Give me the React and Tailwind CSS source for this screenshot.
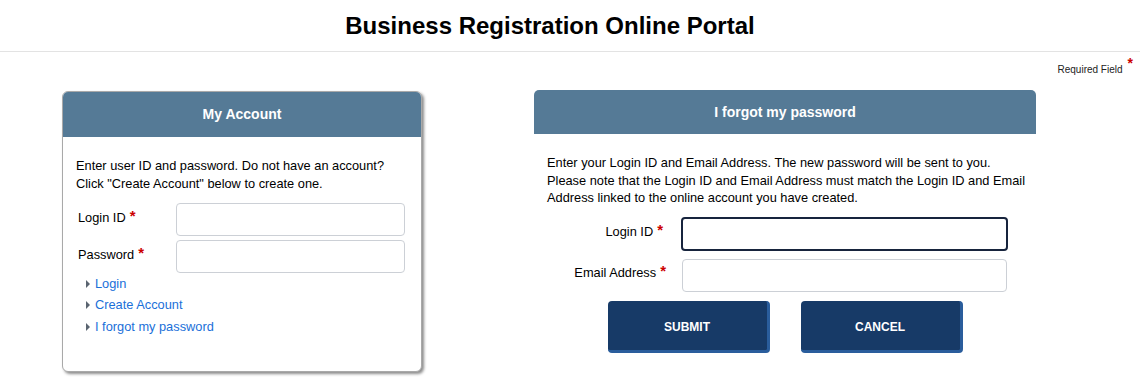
import React from "react";

const Star = () => (
  <span className="ml-1 align-top text-[15px] font-bold leading-none text-[#cc0000]">*</span>
);

const LinkItem = ({ children, h = "h-[21px]" }) => (
  <li className={`flex items-center ${h}`}>
    <span className="mr-[5px] inline-block h-0 w-0 border-y-[4px] border-l-[4px] border-y-transparent border-l-[#5a6470]" />
    <a href="#" className="text-[12.8px] text-[#1a6fd9]">
      {children}
    </a>
  </li>
);

const App = () => {
  return (
    <div className="min-h-[389px] bg-white text-black" style={{ fontFamily: '"Liberation Sans", Arial, sans-serif' }}>
      {/* Page title */}
      <header className="flex h-[52px] items-center justify-center border-b border-[#e3e3e3] pr-[40px]">
        <h1 className="text-[24px] font-bold">Business Registration Online Portal</h1>
      </header>

      <div className="flex justify-end pr-[7px] pt-[4px]">
        <span className="mt-[6px] text-[10px] text-[#222]">Required Field</span>
        <span className="ml-[5px] text-[14px] font-bold leading-none text-[#cc0000]">*</span>
      </div>

      <div className="flex items-start pl-[62px] pt-[14px]">
        {/* My Account */}
        <section className="w-[360px] h-[281px] rounded-[6px] border border-[#a9a9a9] bg-white shadow-[2px_2px_3px_rgba(0,0,0,0.45)]">
          <div className="flex h-[45px] items-center justify-center rounded-t-[5px] bg-[#557a96] text-[14px] font-bold text-white">
            My Account
          </div>
          <div className="px-[13px] pt-[20px]">
            <p className="whitespace-nowrap text-[12.8px] leading-[18px]">
              Enter user ID and password. Do not have an account?
              <br />
              Click "Create Account" below to create one.
            </p>
            <div className="mt-[10px] flex flex-col gap-[4px]">
              <div className="flex">
                <label className="w-[100px] pl-[2px] pt-[5px] text-[12.8px]">
                  Login ID<Star />
                </label>
                <input className="h-[33px] w-[229px] rounded-[4px] border border-[#ccd0d6] outline-none" />
              </div>
              <div className="flex">
                <label className="w-[100px] pl-[2px] pt-[5px] text-[12.8px]">
                  Password<Star />
                </label>
                <input type="password" className="h-[33px] w-[229px] rounded-[4px] border border-[#ccd0d6] outline-none" />
              </div>
            </div>
            <ul className="pl-[10px]">
              <LinkItem>Login</LinkItem>
              <LinkItem>Create Account</LinkItem>
              <LinkItem h="h-[23px]">I forgot my password</LinkItem>
            </ul>
          </div>
        </section>

        {/* Forgot password */}
        <section className="ml-[112px] w-[502px] -mt-[1px]">
          <div className="flex h-[44px] items-center justify-center rounded-t-[5px] bg-[#557a96] text-[14px] font-bold text-white">
            I forgot my password
          </div>
          <div className="pt-[20px]">
            <p className="whitespace-nowrap px-[13px] text-[12.8px] leading-[17.5px]">
              Enter your Login ID and Email Address. The new password will be sent to you.
              <br />
              Please note that the Login ID and Email Address must match the Login ID and Email
              <br />
              Address linked to the online account you have created.
            </p>
            <div className="mt-[10px] flex flex-col gap-[8px]">
              <div className="flex">
                <label className="w-[145px] pr-[16px] pt-[5px] text-right text-[12.8px]">
                  Login ID<Star />
                </label>
                <input
                  autoFocus
                  className="ml-[2px] h-[34px] w-[327px] rounded-[4px] border-2 border-[#17243d] px-[12px] outline-none"
                />
              </div>
              <div className="flex">
                <label className="w-[148px] pr-[16px] pt-[4px] text-right text-[12.8px]">
                  Email Address<Star />
                </label>
                <input className="h-[33px] w-[325px] rounded-[4px] border border-[#ccd0d6] outline-none" />
              </div>
            </div>
            <div className="mt-[9px] flex justify-center gap-[31px]">
              <button className="h-[52px] w-[162px] rounded-[4px] border-b-[3px] border-r-[3px] border-[#2a5d9c] bg-[#173a67] pt-[3px] text-[12px] font-bold text-white">
                SUBMIT
              </button>
              <button className="h-[52px] w-[162px] rounded-[4px] border-b-[3px] border-r-[3px] border-[#2a5d9c] bg-[#173a67] pt-[3px] text-[12px] font-bold text-white">
                CANCEL
              </button>
            </div>
          </div>
        </section>
      </div>
    </div>
  );
};

export default App;
